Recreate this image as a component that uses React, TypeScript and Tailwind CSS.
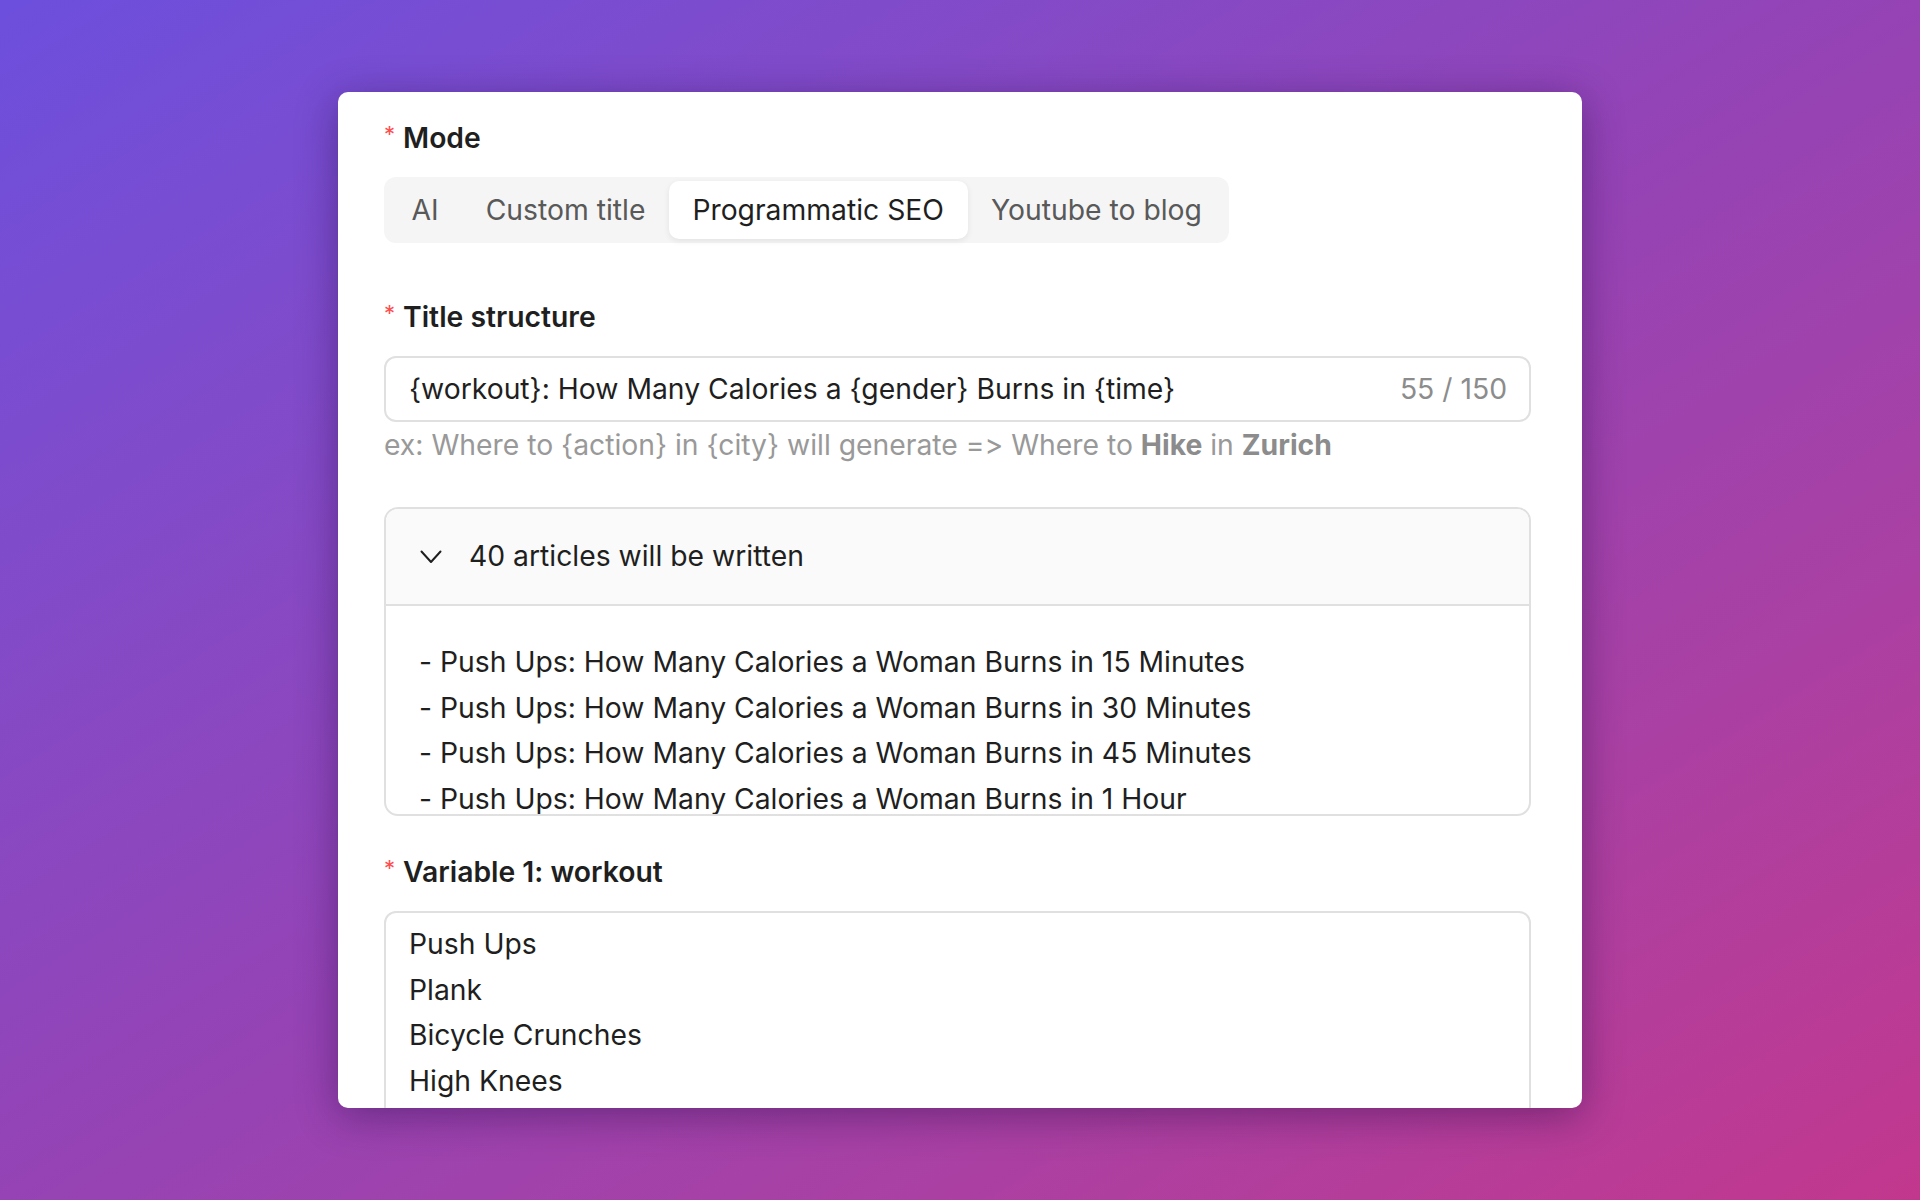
import React from 'react';

const modes = ['AI', 'Custom title', 'Programmatic SEO', 'Youtube to blog'];

const articles = [
  '- Push Ups: How Many Calories a Woman Burns in 15 Minutes',
  '- Push Ups: How Many Calories a Woman Burns in 30 Minutes',
  '- Push Ups: How Many Calories a Woman Burns in 45 Minutes',
  '- Push Ups: How Many Calories a Woman Burns in 1 Hour',
  '- Push Ups: How Many Calories a Woman Burns in 2 Hours',
];

const workouts = ['Push Ups', 'Plank', 'Bicycle Crunches', 'High Knees', 'Jumping Jacks'];

const Label: React.FC<{ children: React.ReactNode }> = ({ children }) => (
  <div className="flex items-center h-[45px] mb-[16px]">
    <span className="text-[#ff4d4f] text-[22px] leading-none mr-[8px] -mt-[10px]">*</span>
    <span className="font-semibold text-[#1f1f1f]">{children}</span>
  </div>
);

const App: React.FC = () => {
  const selected = 'Programmatic SEO';

  return (
    <div
      className="h-screen w-full flex items-center justify-center bg-linear-to-br from-[#6c4fdd] via-[#9543b5] to-[#c2378e]"
      style={{ fontFamily: 'Inter, "Noto Sans", sans-serif' }}
    >
      <div className="w-[1244px] h-[1016px] bg-white rounded-[10px] overflow-hidden pt-[24px] pl-[46px] pr-[51px] text-[28.3px] leading-[45px] text-[#1f1f1f] [font-feature-settings:'calt'_0] shadow-[0_8px_40px_rgba(40,10,70,0.45)]">
        {/* Mode */}
        <Label>Mode</Label>
        <div className="inline-flex bg-[#f5f5f5] rounded-[12px] p-[4px]">
          {modes.map((m) => (
            <div
              key={m}
              className={`h-[58px] px-[23.5px] leading-[58px] rounded-[10px] ${
                m === selected ? 'bg-white text-[#1f1f1f] shadow-[0_2px_6px_rgba(0,0,0,0.08)]' : 'text-[#595959]'
              }`}
            >
              {m}
            </div>
          ))}
        </div>

        {/* Title structure */}
        <div className="mt-[52px]">
          <Label>Title structure</Label>
          <div className="h-[66px] border-2 border-[#e0e0e0] rounded-[12px] pl-[23px] pr-[22px] flex items-center justify-between">
            <span>{'{workout}: How Many Calories a {gender} Burns in {time}'}</span>
            <span className="text-[#8c8c8c]">55 / 150</span>
          </div>
          <div className="mt-[1px] text-[#999999]">
            {'ex: Where to {action} in {city} will generate => Where to '}
            <span className="font-bold text-[#8c8c8c]">Hike</span> in{' '}
            <span className="font-bold text-[#8c8c8c]">Zurich</span>
          </div>
        </div>

        {/* Collapse */}
        <div className="mt-[39px] border-2 border-[#e0e0e0] rounded-[14px] overflow-hidden">
          <div className="h-[97px] bg-[#fafafa] border-b-2 border-[#e0e0e0] flex items-center pl-[34px]">
            <svg width="22" height="14" viewBox="0 0 22 14" fill="none" className="mr-[27px]">
              <polyline points="1.5,1.5 11,12 20.5,1.5" stroke="#1f1f1f" strokeWidth="2" strokeLinejoin="round" strokeLinecap="round" />
            </svg>
            <span>40 articles will be written</span>
          </div>
          <div className="h-[208px] overflow-hidden pt-[34px] pl-[33px]">
            {articles.map((a) => (
              <div key={a} className="leading-[45.5px]">
                {a}
              </div>
            ))}
          </div>
        </div>

        {/* Variable 1 */}
        <div className="mt-[34px]">
          <Label>Variable 1: workout</Label>
          <div className="h-[300px] border-2 border-[#e0e0e0] rounded-[12px] pt-[9px] px-[23px]">
            {workouts.map((w) => (
              <div key={w} className="leading-[45.5px]">
                {w}
              </div>
            ))}
          </div>
        </div>
      </div>
    </div>
  );
};

export default App;
